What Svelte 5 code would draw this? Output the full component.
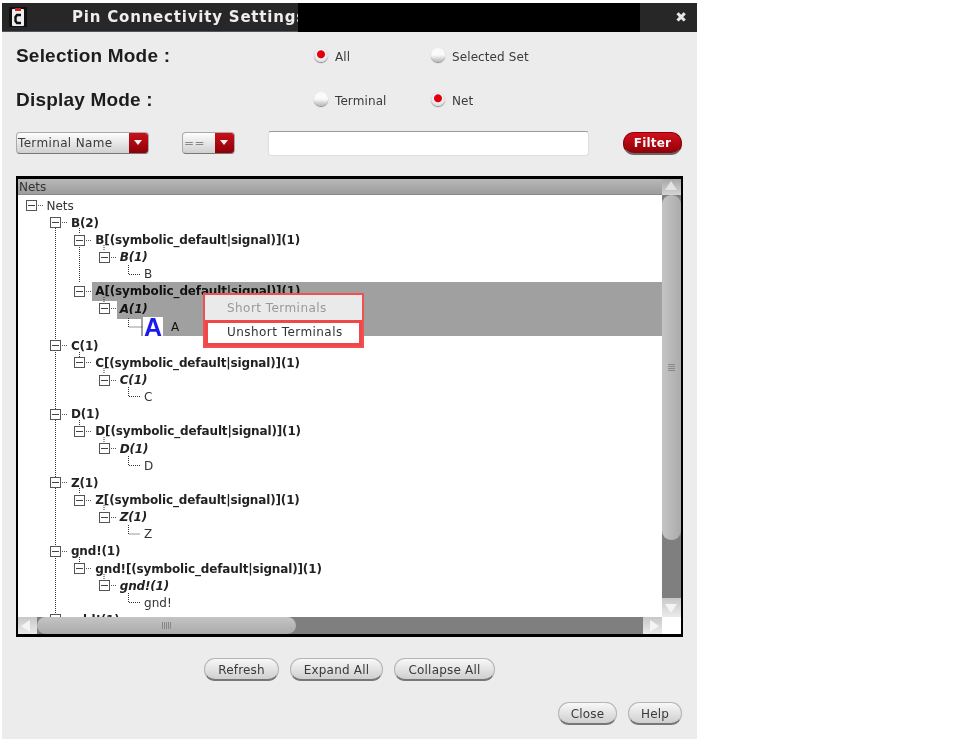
<script>
	/* level drives the indent, kind drives the text style */
	const rows = [
		{ level: 0, text: 'Nets', kind: 'root' },
		{ level: 1, text: 'B(2)', kind: 'net' },
		{ level: 2, text: 'B[(symbolic_default|signal)](1)', kind: 'net' },
		{ level: 3, text: 'B(1)', kind: 'sub' },
		{ level: 4, text: 'B', kind: 'leaf' },
		{ level: 2, text: 'A[(symbolic_default|signal)](1)', kind: 'net', hl: true },
		{ level: 3, text: 'A(1)', kind: 'sub', hl: true },
		{ level: 4, text: 'A', kind: 'leaf', hl: true, tall: true },
		{ level: 1, text: 'C(1)', kind: 'net' },
		{ level: 2, text: 'C[(symbolic_default|signal)](1)', kind: 'net' },
		{ level: 3, text: 'C(1)', kind: 'sub' },
		{ level: 4, text: 'C', kind: 'leaf' },
		{ level: 1, text: 'D(1)', kind: 'net' },
		{ level: 2, text: 'D[(symbolic_default|signal)](1)', kind: 'net' },
		{ level: 3, text: 'D(1)', kind: 'sub' },
		{ level: 4, text: 'D', kind: 'leaf' },
		{ level: 1, text: 'Z(1)', kind: 'net' },
		{ level: 2, text: 'Z[(symbolic_default|signal)](1)', kind: 'net' },
		{ level: 3, text: 'Z(1)', kind: 'sub' },
		{ level: 4, text: 'Z', kind: 'leaf' },
		{ level: 1, text: 'gnd!(1)', kind: 'net' },
		{ level: 2, text: 'gnd![(symbolic_default|signal)](1)', kind: 'net' },
		{ level: 3, text: 'gnd!(1)', kind: 'sub' },
		{ level: 4, text: 'gnd!', kind: 'leaf' },
		{ level: 1, text: 'vdd!(1)', kind: 'net' }
	];
	const indent = 24.4;
</script>

<div class="window">
	<header class="titlebar">
		<div class="title">
			<svg class="appicon" width="18" height="20" viewBox="0 0 18 20">
				<rect x="0" y="0" width="18" height="20" fill="#111" />
				<rect x="3" y="2" width="12" height="17" rx="1" fill="#eee" />
				<rect x="6" y="1" width="6" height="3" fill="#c22" />
				<path d="M12 8H8L6.5 10V14L8 16H12" fill="none" stroke="#111" stroke-width="2.4" />
			</svg>
			<span>Pin Connectivity Settings</span>
		</div>
		<div class="redact"></div>
		<div class="closebox">✖</div>
	</header>

	<section class="modes">
		<h2>Selection Mode :</h2>
		<label class="opt"><i class="radio on"></i>All</label>
		<label class="opt"><i class="radio"></i>Selected Set</label>
		<h2>Display Mode :</h2>
		<label class="opt"><i class="radio"></i>Terminal</label>
		<label class="opt"><i class="radio on"></i>Net</label>
	</section>

	<section class="filters">
		<div class="combo name"><span>Terminal Name</span><b></b></div>
		<div class="combo op"><span>==</span><b></b></div>
		<div class="field"></div>
		<button class="btn red">Filter</button>
	</section>

	<section class="panel">
		<div class="head">Nets</div>
		<div class="vbar">
			<div class="arrow up"></div>
			<div class="vthumb"><span class="grip-h"></span></div>
			<div class="track"></div>
			<div class="arrow down"></div>
		</div>
		<div class="tree">
			<svg class="lines" width="644" height="422">
				<g fill="none" stroke="#333" stroke-dasharray="1 1">
					<path d="M37.5 33V422M61.5 33V39M61.5 50V87M61.5 157V162M61.5 225V231M61.5 293V299M61.5 362V368" />
					<path d="M86 50V56M86 102V107M86 173V179M86 242V248M86 310V316M86 379V385" />
					<path d="M110.5 70V79.5H122M110.5 123V132H125M110.5 192V201.5H122M110.5 261V270.5H122M110.5 330V339H122M110.5 398V407.5H122" />
				</g>
			</svg>
			{#each rows as r}
				<div class="row" class:hl={r.hl} class:tall={r.tall} style="padding-left:{7.5 + r.level * indent}px">
					{#if r.kind === 'leaf'}
						<span class="gap"></span>
						{#if r.tall}
							<span class="glyph">A</span>
						{/if}
					{:else}
						<span class="box"></span><span class="stub"></span>
					{/if}
					<span class="txt {r.kind}">{r.text}</span>
				</div>
			{/each}
		</div>
		<div class="hbar">
			<div class="arrow left"></div>
			<div class="hthumb"><span class="grip-v"></span></div>
			<div class="track"></div>
			<div class="arrow right"></div>
		</div>
		<div class="corner"></div>

		<div class="menu">
			<div class="item off">Short Terminals</div>
			<div class="item picked">Unshort Terminals</div>
		</div>
	</section>

	<section class="actions">
		<button class="btn">Refresh</button>
		<button class="btn">Expand All</button>
		<button class="btn">Collapse All</button>
	</section>
	<section class="footer">
		<button class="btn">Close</button>
		<button class="btn">Help</button>
	</section>
</div>

<style>
	:global(body) {
		margin: 0;
		background: #fff;
	}

	.window {
		box-sizing: border-box;
		width: 695px;
		height: 736px;
		margin: 3px 0 0 2px;
		background: #ececec;
		font-family: "DejaVu Sans", sans-serif;
		font-size: 12px;
		color: #3a3a3a;
		display: flex;
		flex-direction: column;
		filter: blur(0.35px);
	}

	.titlebar {
		height: 29px;
		flex: none;
		display: flex;
		background: #000;
		border-radius: 3px 3px 0 0;
	}
	.title {
		width: 296px;
		flex: none;
		overflow: hidden;
		white-space: nowrap;
		display: flex;
		align-items: center;
		background: #272727;
		border-bottom: 1px solid #4a5560;
		box-sizing: border-box;
	}
	.appicon {
		flex: none;
		margin-left: 7px;
	}
	.title span {
		margin-left: 45px;
		font-weight: bold;
		font-size: 15px;
		letter-spacing: 0.8px;
		color: #eee;
	}
	.redact {
		flex: 1;
	}
	.closebox {
		width: 57px;
		background: #272727;
		color: #e8e8e8;
		font-size: 14px;
		line-height: 29px;
		text-align: right;
		padding-right: 10px;
		box-sizing: border-box;
	}

	.modes {
		display: grid;
		grid-template-columns: 298px 117px 1fr;
		grid-auto-rows: 44px;
		align-items: center;
		padding: 2px 0 0 14px;
		height: 90px;
		box-sizing: border-box;
	}
	h2 {
		margin: 0;
		font: bold 19px "Liberation Sans", sans-serif;
		letter-spacing: 0.2px;
		color: #1d1d1d;
	}
	.opt {
		display: flex;
		align-items: center;
		gap: 7px;
		letter-spacing: 0.1px;
		padding-top: 2px;
	}
	.radio {
		width: 14px;
		height: 14px;
		border-radius: 50%;
		background: linear-gradient(#fafafa 50%, #b5b5b5);
		box-shadow: 0 1px 1px #888;
		position: relative;
		top: -2.5px;
	}
	.radio.on {
		background: radial-gradient(circle at 50% 45%, #e00010 0 3.5px, #f4f4f4 4.5px, #c4c4c4 100%);
	}

	.filters {
		display: flex;
		align-items: center;
		height: 26px;
		margin-top: 8px;
		padding-left: 14px;
	}
	.combo {
		height: 22px;
		box-sizing: border-box;
		display: flex;
		border-radius: 4px;
		background: linear-gradient(#fdfdfd, #d0d0d0);
		border: 1px solid #aaa;
		border-bottom-color: #777;
		overflow: hidden;
	}
	.combo span {
		flex: 1;
		padding-left: 1px;
		line-height: 20px;
		white-space: nowrap;
		letter-spacing: 0.35px;
	}
	.op span {
		color: #888;
	}
	.combo b {
		width: 19px;
		background: linear-gradient(#c9101c, #8c0008);
		position: relative;
	}
	.combo b::after {
		content: '';
		position: absolute;
		left: 5px;
		top: 7px;
		border: 4.5px solid transparent;
		border-top: 5px solid #f2f2f2;
		border-bottom: 0;
	}
	.combo.name {
		width: 133px;
	}
	.combo.op {
		width: 53px;
		margin-left: 33px;
	}
	.field {
		width: 321px;
		height: 25px;
		box-sizing: border-box;
		margin-left: 33px;
		background: #fff;
		border: 1px solid #ddd;
		border-top: 1px solid #999;
		border-radius: 3px;
	}
	.filters .red {
		margin-left: 34px;
		width: 59px;
	}

	.btn {
		height: 23px;
		padding: 1px 0 0;
		border: 1px solid #b5b5b5;
		border-bottom: 2px solid #777;
		border-radius: 11px;
		background: linear-gradient(#f8f8f8, #cfcfcf);
		font: 12px "DejaVu Sans", sans-serif;
		letter-spacing: 0.2px;
		color: #3a3a3a;
	}
	.btn.red {
		background: linear-gradient(#d2101c, #8e0008);
		border-color: #8e0008 #8e0008 #666;
		color: #f4f4f4;
		font-weight: bold;
		padding-top: 0;
	}

	.panel {
		position: relative;
		box-sizing: border-box;
		width: 667px;
		height: 461px;
		margin: 20px 0 0 14px;
		border: 2px solid #000;
		border-top-width: 3px;
		border-bottom-width: 3px;
		display: grid;
		grid-template-columns: 644px 19px;
		grid-template-rows: 16px 422px 17px;
		background: #fff;
	}
	.head {
		grid-column: 1;
		background: linear-gradient(#b8b8b8, #9c9c9c);
		color: #333;
		line-height: 16px;
		padding-left: 1px;
		border-bottom: 1px solid #8a8a8a;
		box-sizing: border-box;
	}
	.vbar {
		grid-column: 2;
		grid-row: 1 / 3;
		display: flex;
		flex-direction: column;
		background: #7f7f7f;
	}
	.hbar {
		grid-column: 1;
		grid-row: 3;
		display: flex;
		background: #7f7f7f;
	}
	.corner {
		background: #fff;
	}
	.track {
		flex: 1;
	}
	.arrow {
		flex: none;
		position: relative;
		background: linear-gradient(#c8c8c8, #eaeaea);
	}
	.vbar .arrow {
		height: 19px;
	}
	.hbar .arrow {
		width: 19px;
	}
	.vbar .up {
		height: 16px;
		background: linear-gradient(#a8a8a8, #d4d4d4);
	}
	.arrow::after {
		content: '';
		position: absolute;
		width: 0;
		height: 0;
		border: 6px solid transparent;
	}
	.up::after {
		left: 3px;
		top: 2px;
		border-bottom: 9px solid #e2e2e2;
		border-top: 0;
	}
	.down::after {
		left: 3px;
		top: 6px;
		border-top: 9px solid #f4f4f4;
		border-bottom: 0;
	}
	.left::after {
		left: 3px;
		top: 3px;
		border-right: 9px solid #f4f4f4;
		border-left: 0;
	}
	.right::after {
		left: 7px;
		top: 3px;
		border-left: 9px solid #f4f4f4;
		border-right: 0;
	}
	.vthumb {
		height: 345px;
		flex: none;
		background: linear-gradient(90deg, #c4c4c4, #ababab);
		border-radius: 9px;
		display: flex;
		align-items: center;
		justify-content: center;
	}
	.hthumb {
		width: 259px;
		flex: none;
		background: linear-gradient(#c4c4c4, #ababab);
		border-radius: 9px;
		display: flex;
		align-items: center;
		justify-content: center;
	}
	.grip-h {
		width: 7px;
		height: 8px;
		background: repeating-linear-gradient(#888 0 1px, transparent 1px 2px);
	}
	.grip-v {
		width: 9px;
		height: 7px;
		background: repeating-linear-gradient(90deg, #888 0 1px, transparent 1px 2px);
	}

	.tree {
		grid-column: 1;
		grid-row: 2;
		position: relative;
		overflow: hidden;
		padding-top: 2.2px;
		isolation: isolate;
	}
	.lines {
		position: absolute;
		left: 0;
		top: 0;
	}
	.row {
		position: relative;
		box-sizing: border-box;
		height: 17.15px;
		display: flex;
		align-items: center;
		white-space: nowrap;
	}
	.row.tall {
		height: 20px;
	}
	.box {
		box-sizing: border-box;
		width: 11px;
		height: 11px;
		flex: none;
		border: 1px solid #555;
		background: linear-gradient(#444, #444) center / 7px 1px no-repeat #fff;
		position: relative;
		z-index: 1;
	}
	.stub {
		width: 5px;
		height: 1px;
		flex: none;
		margin: 0 4px 0 1px;
		background: repeating-linear-gradient(90deg, #555 0 1px, transparent 1px 2px);
	}
	.gap {
		width: 21px;
		flex: none;
	}
	.txt {
		position: relative;
		color: #333;
	}
	.net {
		font-weight: bold;
		letter-spacing: -0.15px;
		color: #222;
	}
	.sub {
		font-weight: bold;
		font-style: italic;
		letter-spacing: -0.15px;
		color: #222;
	}
	.hl .txt {
		color: #111;
	}
	/* selection band runs from the label to the scrollbar */
	.hl .txt::before {
		content: '';
		position: absolute;
		z-index: -1;
		left: -3px;
		top: -2px;
		bottom: -3px;
		width: 700px;
		background: #a0a0a0;
	}
	.hl.tall .txt::before {
		left: -30px;
		top: -4px;
		bottom: -2px;
	}
	.glyph {
		width: 20px;
		height: 20px;
		margin: 0 8px 0 -1px;
		flex: none;
		background: #fff;
		color: #1a1aee;
		font: bold 25px/20px "Liberation Sans", sans-serif;
		text-align: center;
		position: relative;
		z-index: 1;
	}

	.menu {
		position: absolute;
		left: 185px;
		top: 114px;
		width: 161px;
		box-sizing: border-box;
		border: 2px solid #f05050;
		background: #eaeaea;
	}
	.item {
		height: 25px;
		line-height: 27px;
		padding-left: 22px;
		box-sizing: border-box;
		letter-spacing: 0.45px;
	}
	.item.off {
		color: #999;
	}
	.item.picked {
		height: 26px;
		line-height: 18px;
		background: #fff;
		border: 3px solid #f04848;
		padding-left: 19px;
		color: #333;
	}

	.actions {
		display: flex;
		justify-content: flex-start;
		gap: 11px;
		margin: 21px 0 0 202px;
	}
	.actions .btn:nth-child(1) {
		width: 75px;
	}
	.actions .btn:nth-child(2) {
		width: 93px;
	}
	.actions .btn:nth-child(3) {
		width: 101px;
	}
	.footer {
		display: flex;
		gap: 11px;
		margin: 21px 0 0 556px;
	}
	.footer .btn:nth-child(1) {
		width: 59px;
	}
	.footer .btn:nth-child(2) {
		width: 54px;
	}
</style>
